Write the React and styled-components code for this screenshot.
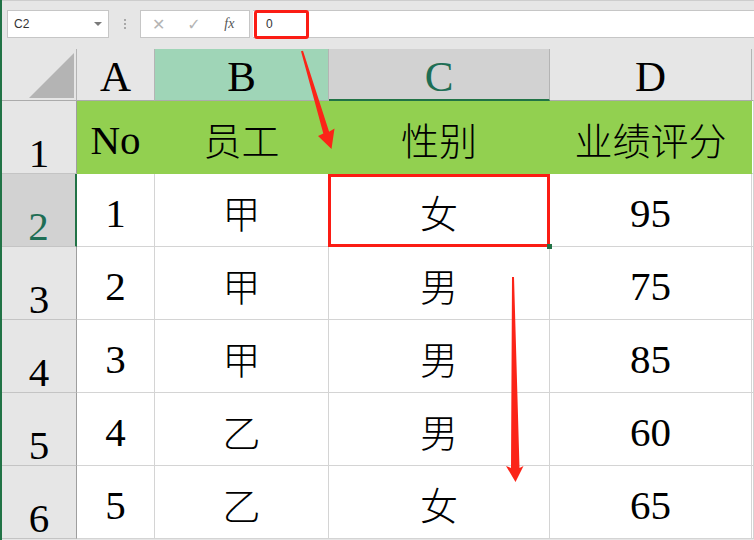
import React from 'react'
import styled, { createGlobalStyle } from 'styled-components'

const GlobalStyle = createGlobalStyle`
    html, body {
        margin:0;
        padding:0;
        background:#ffffff;
    }
`

const Window = styled.div`
    width:754px;
    height:540px;
    overflow:hidden;
    position:relative;
    box-sizing:border-box;
    border-left:2px solid #217346;
    background:#e6e6e6;
    font-family:"Liberation Serif", "Noto Sans CJK SC", serif;
`

const FormulaBar = styled.div`
    height:49px;
    box-sizing:border-box;
    border-top:1px solid #cdcdcd;
    display:flex;
    align-items:center;
    padding:0 0 2px 5px;
    font-family:"Liberation Sans", Arial, sans-serif;
    font-size:12px;
    color:#333;
`

const NameBox = styled.div`
    width:102px;
    height:28px;
    box-sizing:border-box;
    background:#fff;
    border:1px solid #c6c6c6;
    display:flex;
    align-items:center;
    justify-content:space-between;
    padding:0 6px 0 6px;
`

const Caret = styled.span`
    width:0;
    height:0;
    border-left:4px solid transparent;
    border-right:4px solid transparent;
    border-top:4px solid #7a7a7a;
`

const Dots = styled.div`
    width:31px;
    display:flex;
    flex-direction:column;
    align-items:center;
    gap:2px;
    span {
        width:2px;
        height:2px;
        background:#a8a8a8;
    }
`

const FxBox = styled.div`
    width:110px;
    height:28px;
    box-sizing:border-box;
    background:#fff;
    border:1px solid #c6c6c6;
    display:flex;
    align-items:center;
    justify-content:space-around;
    padding:0 2px 0 0;
`

const FxButton = styled.span`
    width:24px;
    display:flex;
    justify-content:center;
    color:${p => p.$dark ? '#555' : '#b4b4b4'};
    font-family:${p => p.$dark ? '"Liberation Serif", serif' : '"DejaVu Sans", sans-serif'};
    font-style:${p => p.$dark ? 'italic' : 'normal'};
    font-size:${p => p.$dark ? '14px' : '16px'};
`

const FormulaInput = styled.div`
    flex:1;
    height:28px;
    margin-left:3px;
    box-sizing:border-box;
    background:#fff;
    border-top:1px solid #c6c6c6;
    border-bottom:1px solid #c6c6c6;
    display:flex;
    align-items:center;
`

const ValueMark = styled.div`
    width:55px;
    height:29px;
    box-sizing:border-box;
    border:3px solid #fb1c14;
    border-radius:3px;
    margin-left:1px;
    display:flex;
    align-items:center;
    padding-left:9px;
`

const Sheet = styled.div`
    display:grid;
    grid-template-columns:75px 78px 174px 221px 202px 1fr;
    grid-template-rows:52px repeat(6, 73px);
`

const Corner = styled.div`
    box-sizing:border-box;
    border-right:1px solid #b4b4b4;
    border-bottom:1px solid #ababab;
    display:flex;
    align-items:flex-end;
    justify-content:flex-end;
    padding:0 2px 2px 0;
`

const Triangle = styled.div`
    width:45px;
    height:45px;
    background:#b4b4b4;
    clip-path:polygon(100% 0, 100% 100%, 0 100%);
`

const ColHead = styled.div`
    box-sizing:border-box;
    background:${p => p.$tone === 'green' ? '#9fd5b7' : p.$tone === 'gray' ? '#d2d2d2' : '#e6e6e6'};
    border-right:1px solid ${p => p.$last ? 'transparent' : '#b4b4b4'};
    border-bottom:${p => p.$tone === 'gray' ? '2px solid #217346' : '1px solid #ababab'};
    color:${p => p.$tone === 'gray' ? '#1e6e55' : '#000'};
    font-size:43px;
    display:flex;
    align-items:center;
    justify-content:center;
    padding-top:4px;
`

const RowHead = styled.div`
    box-sizing:border-box;
    background:${p => p.$active ? '#d2d2d2' : '#e6e6e6'};
    border-right:${p => p.$active ? '2px solid #217346' : '1px solid #9e9e9e'};
    border-bottom:1px solid #c4c4c4;
    color:${p => p.$active ? '#1e6e55' : '#000'};
    font-size:41px;
    line-height:34px;
    display:flex;
    align-items:flex-end;
    justify-content:center;
    padding-bottom:3px;
`

const Cell = styled.div`
    position:relative;
    box-sizing:border-box;
    background:${p => p.$fill ? '#92d050' : '#fff'};
    border-right:1px solid ${p => p.$fill ? '#92d050' : '#d4d4d4'};
    border-bottom:1px solid ${p => p.$fill ? '#92d050' : '#d4d4d4'};
    font-size:${p => p.$cjk ? '38px' : '41px'};
    font-weight:300;
    display:flex;
    align-items:center;
    justify-content:center;
    padding-top:${p => p.$cjk ? '2px' : '6px'};
    color:#000;

    ${p => p.$selected && `
        &::after {
            content:'';
            position:absolute;
            left:-1px;
            top:0;
            right:-1px;
            bottom:-1px;
            border:3px solid #fb1c14;
        }
        &::before {
            content:'';
            position:absolute;
            right:-3px;
            bottom:-3px;
            width:5px;
            height:5px;
            background:#217346;
            z-index:2;
        }
    `}
`

const Arrows = styled.svg`
    position:absolute;
    left:-2px;
    top:0;
    pointer-events:none;
`

const columns = ['A', 'B', 'C', 'D']

const rows = [
    { no: 'No', staff: '员工', sex: '性别', score: '业绩评分', header: true },
    { no: '1', staff: '甲', sex: '女', score: '95' },
    { no: '2', staff: '甲', sex: '男', score: '75' },
    { no: '3', staff: '甲', sex: '男', score: '85' },
    { no: '4', staff: '乙', sex: '男', score: '60' },
    { no: '5', staff: '乙', sex: '女', score: '65' },
]

const App = () => {
    return (
        <>
            <GlobalStyle />
            <Window>
                <FormulaBar>
                    <NameBox>
                        <span>C2</span>
                        <Caret />
                    </NameBox>
                    <Dots><span /><span /><span /></Dots>
                    <FxBox>
                        <FxButton>✕</FxButton>
                        <FxButton>✓</FxButton>
                        <FxButton $dark>fx</FxButton>
                    </FxBox>
                    <FormulaInput>
                        <ValueMark>0</ValueMark>
                    </FormulaInput>
                </FormulaBar>

                <Sheet>
                    <Corner><Triangle /></Corner>
                    {columns.map((c) => (
                        <ColHead key={c} $tone={c === 'B' ? 'green' : c === 'C' ? 'gray' : ''}>{c}</ColHead>
                    ))}
                    <ColHead $last />

                    {rows.map((r, i) => (
                        <React.Fragment key={i}>
                            <RowHead $active={i === 1}>{i + 1}</RowHead>
                            <Cell $fill={r.header}>{r.no}</Cell>
                            <Cell $fill={r.header} $cjk>{r.staff}</Cell>
                            <Cell $fill={r.header} $cjk $selected={i === 1}>{r.sex}</Cell>
                            <Cell $fill={r.header} $cjk={r.header}>{r.score}</Cell>
                            <Cell />
                        </React.Fragment>
                    ))}
                </Sheet>

                <Arrows width="754" height="540" viewBox="0 0 754 540">
                    <polygon
                        fill="#fb2418"
                        points="301,51.3 303,50.7 329.1,131.8 334.5,128.5 331.5,149 318,136 323.3,133.5"
                    />
                    <polygon
                        fill="#fb2418"
                        points="512,277 514,277 519.5,468 523.5,466 515.5,482 506,466 511,468"
                    />
                </Arrows>
            </Window>
        </>
    )
}

export default App
